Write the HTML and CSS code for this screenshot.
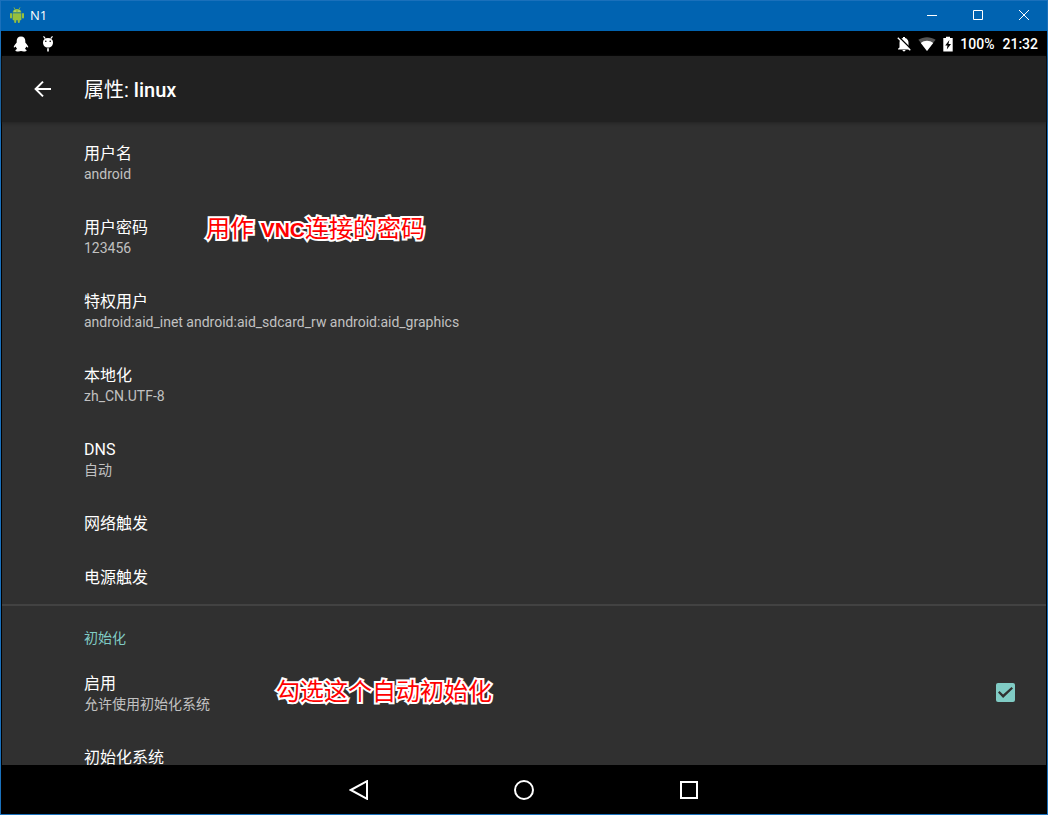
FILE: index.html
```html
<!DOCTYPE html>
<html lang="zh-CN">
<head>
<meta charset="utf-8">
<meta name="viewport" content="width=device-width, initial-scale=1">
<title>N1</title>
<link rel="stylesheet" href="styles.css">
</head>
<body>
<div class="window">
  <header class="titlebar">
    <svg class="app-icon" width="14" height="16" viewBox="0 0 14 16" aria-hidden="true">
      <g fill="#97c03d">
        <path d="M2.600 5.600C2.600 3.400 4.400 1.900 7 1.900s4.400 1.500 4.400 3.700z"/>
        <path d="M2.600 6.200h8.800v6c0 .6-.4 1-1 1H3.600c-.6 0-1-.4-1-1z"/>
        <rect x="0" y="6" width="2" height="5.500" rx="1"/>
        <rect x="12" y="6" width="2" height="5.500" rx="1"/>
        <rect x="4.200" y="12" width="2" height="4" rx="1"/>
        <rect x="7.800" y="12" width="2" height="4" rx="1"/>
      </g>
      <path d="M4 .4l1 2M10 .4l-1 2" stroke="#97c03d" stroke-width=".8"/>
      <circle cx="5" cy="4" r=".5" fill="#fff"/><circle cx="9" cy="4" r=".5" fill="#fff"/>
    </svg>
    <span class="window-name">N1</span>
    <div class="window-controls">
      <button class="window-button" aria-label="最小化"><svg width="12" height="12" viewBox="0 0 12 12"><path d="M1 6.500h10"/></svg></button>
      <button class="window-button" aria-label="最大化"><svg width="12" height="12" viewBox="0 0 12 12"><path d="M1.500 1.500h9v9h-9z"/></svg></button>
      <button class="window-button" aria-label="关闭"><svg width="12" height="12" viewBox="0 0 12 12"><path d="M1 1l10 10M11 1L1 11"/></svg></button>
    </div>
  </header>

  <div class="screen">
    <div class="statusbar">
      <div class="status-group notifications">
        <svg width="16" height="16" viewBox="0 0 16 16" fill="#fff" aria-hidden="true"><path d="M8 .5c2.900 0 4.300 2.100 4.300 4.400v1.600c1.300 1.500 3 3.500 3 4.600 0 .8-1 .5-2.100-.6-.2 1-.6 1.800-1.300 2.500 1 .4 1.700.9 1.700 1.500 0 1.200-4.200 1.200-5.600.5-1.400.7-5.600.7-5.600-.5 0-.6.700-1.100 1.700-1.500-.7-.7-1.100-1.500-1.300-2.500C1.700 11.600.7 11.900.7 11.100c0-1.100 1.700-3.100 3-4.600V4.900C3.700 2.600 5.100.5 8 .5z"/></svg>
        <svg width="12" height="16" viewBox="0 0 12 16" aria-hidden="true"><path d="M1.500 .4l1.800 2.300M10.500 .4L8.700 2.700" stroke="#fff" stroke-width="1.200"/><path d="M1 6.500C1 3.500 3 2 6 2s5 1.500 5 4.500-2 5-5 5-5-2-5-5z" fill="#fff"/><circle cx="3.800" cy="5.300" r=".8"/><circle cx="8.200" cy="5.300" r=".8"/><path d="M6 12.300v3.300" stroke="#fff" stroke-width="1.600"/></svg>
      </div>
      <div class="status-group">
        <svg class="icon-bell" width="14" height="16" viewBox="0 0 14 16" aria-hidden="true"><path d="M6 2.100V1h2v1.100c2.200.5 3.500 2.300 3.500 4.700v4.700l1.500 1.300v.6H1v-.6l1.500-1.300V6.800C2.500 4.400 3.800 2.600 6 2.100zM5.500 14h3c0 .8-.7 1.400-1.500 1.400S5.500 14.800 5.500 14z" fill="#fff"/><path d="M2 1l12 12" stroke="#000" stroke-width="1.500"/><path d="M.8 1.800l12.500 12.500" stroke="#fff" stroke-width="1.300"/></svg>
        <svg class="icon-wifi" width="18" height="16" viewBox="0 0 18 16" aria-hidden="true"><path d="M.4 3.800C5.500.4 12.500.4 17.600 3.800L9 15z" fill="#555"/><path d="M2.800 7C6.500 4 11.500 4 15.200 7L9 15z" fill="#fff"/></svg>
        <svg class="icon-battery" width="10" height="16" viewBox="0 0 10 16" aria-hidden="true"><path d="M3 .8h4v1.300h2.700V15.500H.3V2.100H3z" fill="#fff"/><path d="M6.400 4L2.200 9.400h2.300l-.7 4L8 8H5.500z"/></svg>
        <span class="battery-level">100%</span>
        <time class="clock">21:32</time>
      </div>
    </div>

    <div class="appbar">
      <button class="back" aria-label="返回"><svg width="18" height="18" viewBox="0 0 18 18"><path d="M17 9H2M9 1.600L1.600 9 9 16.400"/></svg></button>
      <h1 class="page-title">属性: <span class="distro">linux</span></h1>
    </div>

    <main class="settings">
      <section class="group">
        <div class="row"><h2 class="label">用户名</h2><p class="value">android</p></div>
        <div class="row"><h2 class="label">用户密码</h2><p class="value">123456</p><span class="note note-password">用作 <b class="note-latin">VNC</b>连接的密码</span></div>
        <div class="row"><h2 class="label">特权用户</h2><p class="value">android:aid_inet android:aid_sdcard_rw android:aid_graphics</p></div>
        <div class="row"><h2 class="label">本地化</h2><p class="value">zh_CN.UTF-8</p></div>
        <div class="row"><h2 class="label">DNS</h2><p class="value">自动</p></div>
        <div class="row"><h2 class="label">网络触发</h2></div>
        <div class="row"><h2 class="label">电源触发</h2></div>
      </section>
      <section class="group divided">
        <h2 class="category">初始化</h2>
        <div class="row row-check">
          <label class="row-text" for="init-enabled"><span class="label">启用</span><span class="value">允许使用初始化系统</span></label>
          <input class="check" type="checkbox" id="init-enabled" checked>
          <span class="note note-init">勾选这个自动初始化</span>
        </div>
        <div class="row"><h2 class="label">初始化系统</h2></div>
      </section>
    </main>

    <nav class="navbar">
      <button class="nav-button" aria-label="返回"><svg width="20" height="20" viewBox="0 0 20 20"><path d="M1.800 10L18 1.200v17.600z"/></svg></button>
      <button class="nav-button" aria-label="主屏幕"><svg width="20" height="20" viewBox="0 0 20 20"><circle cx="10" cy="10" r="9"/></svg></button>
      <button class="nav-button" aria-label="最近任务"><svg width="20" height="20" viewBox="0 0 20 20"><path d="M2 2h16v16H2z"/></svg></button>
    </nav>
  </div>
</div>
</body>
</html>
```
FILE: styles.css
```css
* { box-sizing: border-box; }
body, h1, h2, p { margin: 0; }
body {
  font-family: Roboto, "Noto Sans CJK SC", sans-serif;
  color: #fff;
  background: #000;
}
button {
  display: flex;
  align-items: center;
  justify-content: center;
  padding: 0;
  border: 0;
  background: none;
}
button svg { fill: none; stroke: #fff; }

.window {
  display: flex;
  flex-direction: column;
  height: 100vh;
  border: 1px solid #1a70bb;
}
.titlebar {
  flex: none;
  display: flex;
  align-items: center;
  height: 30px;
  padding-left: 9px;
  background: #0063b1;
}
.app-icon { margin-bottom: 2px; }
.window-name {
  margin-left: 6px;
  padding-bottom: 2px;
  font: 13px/18px "Open Sans", sans-serif;
}
.window-controls {
  display: flex;
  margin-left: auto;
}
.window-button {
  width: 46px;
  height: 30px;
  padding-bottom: 2px;
}

.screen {
  flex: 1;
  min-height: 0;
  display: flex;
  flex-direction: column;
  padding: 0 1px;
  background: #000;
}
.statusbar {
  flex: none;
  display: flex;
  align-items: center;
  justify-content: space-between;
  height: 25px;
  padding: 0 8px 0 11px;
  font-size: 14px;
  font-weight: 500;
}
.status-group {
  display: flex;
  align-items: center;
}
.notifications { gap: 13px; }
.icon-wifi { margin-left: 7px; }
.icon-battery { margin-left: 7px; }
.battery-level { margin-left: 7px; }
.clock { margin-left: 8px; }

.appbar {
  flex: none;
  display: flex;
  align-items: center;
  height: 66px;
  padding-left: 32px;
  background: #212121;
  box-shadow: 0 1px 3px #222;
  z-index: 1;
}
.back svg { stroke-width: 2; }
.page-title {
  margin-left: 32px;
  padding-bottom: 2px;
  font-size: 20px;
  font-weight: 400;
}
.distro { font-weight: 500; }

.settings {
  flex: 1;
  min-height: 0;
  overflow: hidden;
  padding-top: 4px;
  background: #303030;
}
.row {
  position: relative;
  padding: 18px 31px 16px 82px;
}
.label {
  display: block;
  font-size: 16px;
  font-weight: 400;
  line-height: 20px;
}
.value {
  display: block;
  font-size: 14px;
  line-height: 20px;
  color: #c1c1c1;
}
.divided { border-top: 2px solid #424242; }
.category {
  padding: 22px 82px 8px;
  font-size: 14px;
  font-weight: 400;
  line-height: 20px;
  color: #80cbc4;
}
.row-check {
  display: flex;
  align-items: center;
  justify-content: space-between;
}
.check {
  appearance: none;
  width: 19px;
  height: 19px;
  margin: 0 0 3px;
  border-radius: 2px;
  background: #80cbc4;
  display: grid;
  place-items: center;
}
.check:checked::before {
  content: "";
  width: 15px;
  height: 11px;
  background: #303030;
  clip-path: polygon(0 50%, 10% 37%, 34% 69%, 90% 0, 100% 13%, 34% 100%);
}
.note {
  position: absolute;
  font-family: "Liberation Sans", "Noto Sans CJK SC", sans-serif;
  font-size: 24px;
  font-weight: 400;
  line-height: 34px;
  color: #f00;
  -webkit-text-stroke: 4px #fff;
  paint-order: stroke fill;
  white-space: nowrap;
}
.note-latin {
  font-size: 21px;
  font-weight: 700;
}
.note-password { top: 12px; left: 204px; }
.note-init { top: 19px; left: 274px; }

.navbar {
  flex: none;
  display: flex;
  justify-content: center;
  height: 49px;
}
.nav-button { width: 165px; }
.nav-button svg { stroke-width: 2; }
```
